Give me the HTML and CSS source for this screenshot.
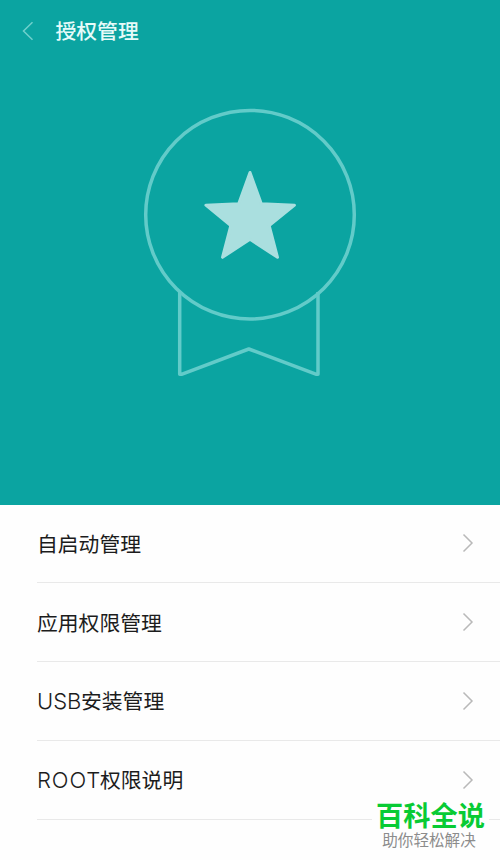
FILE: index.html
```
<!DOCTYPE html>
<html lang="zh-CN">
<head>
<meta charset="utf-8">
<title>授权管理</title>
<link rel="stylesheet" href="styles.css">
</head>
<body>
<main class="screen">
  <section class="hero">
    <header class="bar">
      <svg class="back" viewBox="0 0 12 20"><path d="M10.500 1.200 1.500 10l9 8.800"/></svg>
      <h1 class="title">授权管理</h1>
    </header>
    <svg class="medal" viewBox="140 100 220 280">
      <g class="outline">
        <circle cx="250" cy="214.700" r="104.300"/>
        <path d="M179.700 292V374.300H181.500L248.800 349L316.500 374.300H318V292"/>
      </g>
      <path class="star" d="M250 172.500 261.300 203.700 294.500 205.200 269.200 225.600 277.500 257.300 250 239.200 222.500 257.300 230.800 225.600 205.900 205.200 238.700 203.700Z"/>
    </svg>
  </section>
  <ul class="list">
    <li class="row"><span>自启动管理</span><svg class="next" viewBox="0 0 12 20"><path d="M1.500 1.500 10 10 1.500 18.500"/></svg></li>
    <li class="row"><span>应用权限管理</span><svg class="next" viewBox="0 0 12 20"><path d="M1.500 1.500 10 10 1.500 18.500"/></svg></li>
    <li class="row"><span><span class="latin usb">USB</span>安装管理</span><svg class="next" viewBox="0 0 12 20"><path d="M1.500 1.500 10 10 1.500 18.500"/></svg></li>
    <li class="row"><span><span class="latin root">ROOT</span>权限说明</span><svg class="next" viewBox="0 0 12 20"><path d="M1.500 1.500 10 10 1.500 18.500"/></svg></li>
  </ul>
  <aside class="mark">
    <div class="mark-name">百科全说</div>
    <div class="mark-line">助你轻松解决</div>
  </aside>
</main>
</body>
</html>
```
FILE: styles.css
```
* { box-sizing: border-box; }
body {
  margin: 0;
  background: #fefefe;
  color: #1c1c1c;
  font-family: "Noto Sans CJK SC", sans-serif;
}
.screen {
  position: relative;
  width: 500px;
  height: 860px;
  overflow: hidden;
}
.hero {
  height: 504.500px;
  background: #0ba4a1;
}
.bar {
  display: flex;
  align-items: center;
  height: 61px;
  padding-left: 22px;
}
.back {
  width: 12px;
  height: 20px;
  fill: none;
  stroke: #6fd0cc;
  stroke-width: 1.500;
}
.title {
  margin: 0 0 1px 21.500px;
  color: #e6fbf9;
  font-size: 20.800px;
  line-height: 30px;
  font-weight: 500;
}
.medal {
  display: block;
  width: 220px;
  height: 280px;
  margin: 39px auto 0;
}
.outline {
  fill: none;
  stroke: #62cbc9;
  stroke-width: 3.500;
  stroke-linejoin: round;
}
.star {
  fill: #aadfdf;
  stroke: #aadfdf;
  stroke-width: 3;
  stroke-linejoin: round;
}
.list {
  margin: 0;
  padding: 0 0 0 37px;
  list-style: none;
}
.row {
  display: flex;
  align-items: center;
  justify-content: space-between;
  height: 78.750px;
  padding-right: 26px;
  border-bottom: 1px solid #e9e9e9;
  font-size: 20.800px;
  line-height: 30px;
}
.latin {
  display: inline-block;
  font-family: Inter, "Liberation Sans", sans-serif;
  font-weight: 300;
  font-size: 22px;
}
.usb { width: 44px; }
.root { width: 63px; letter-spacing: 0.900px; }
.next {
  width: 12px;
  height: 20px;
  fill: none;
  stroke: #b9b9b9;
  stroke-width: 1.500;
}
.mark {
  position: absolute;
  left: 372px;
  top: 799px;
  width: 117px;
  height: 52px;
  background: #fefefe;
  text-align: center;
  white-space: nowrap;
}
.mark-name {
  color: #08cb34;
  font-size: 27.200px;
  line-height: 30px;
  font-weight: 700;
}
.mark-line {
  margin-left: -3px;
  color: #8c8c8c;
  font-size: 15.600px;
  line-height: 20px;
}
```
